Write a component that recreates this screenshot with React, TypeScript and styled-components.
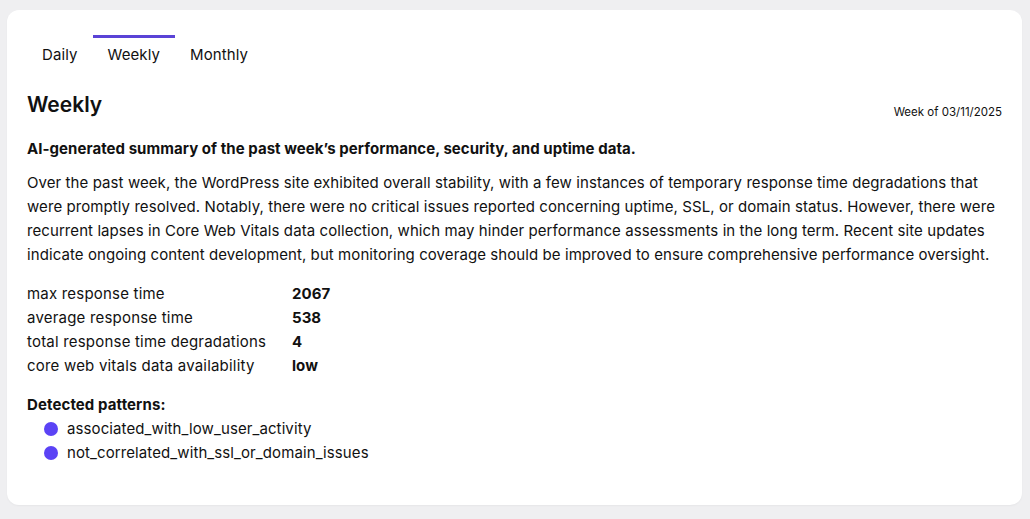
import React, { useState } from 'react';
import styled, { createGlobalStyle } from 'styled-components';

const GlobalStyle = createGlobalStyle`
  html, body {
    margin: 0;
    padding: 0;
    background: #efeff1;
    font-family: Inter, "Noto Sans", sans-serif;
    color: #111;
  }
`;

const Page = styled.div`
  padding: 10px 8px 14px 7px;
  box-sizing: border-box;
  width: 1030px;
  height: 519px;
`;

const Card = styled.div`
  background: #fff;
  border-radius: 12px;
  height: 100%;
  box-sizing: border-box;
  padding: 25px 20px 0 20px;
  box-shadow: 0 1px 2px rgba(0, 0, 0, 0.04);
  letter-spacing: 0.1px;
`;

const Tabs = styled.div`
  display: flex;
`;

const Tab = styled.button<{ $active?: boolean }>`
  background: none;
  border: none;
  border-top: 3px solid ${(p) => (p.$active ? '#5a43d6' : 'transparent')};
  padding: 7px 15px 0 15px;
  font-family: inherit;
  font-size: 15px;
  letter-spacing: 0.1px;
  color: #111;
  line-height: 20px;
  cursor: pointer;
`;

const HeaderRow = styled.div`
  display: flex;
  justify-content: space-between;
  align-items: flex-end;
  margin-top: 27px;
`;

const Title = styled.h2`
  margin: 0;
  font-size: 21px;
  font-weight: 600;
  line-height: 26px;
  letter-spacing: 0;
`;

const WeekOf = styled.span`
  font-size: 11.5px;
  line-height: 16px;
  letter-spacing: 0;
  transform: translateY(2px);
`;

const Subtitle = styled.p`
  margin: 21px 0 0 0;
  font-size: 15px;
  font-weight: 700;
  line-height: 20px;
  letter-spacing: 0.05px;
`;

const Summary = styled.p`
  margin: 12px 0 0 0;
  font-size: 15px;
  line-height: 24px;
  letter-spacing: 0.08px;
`;

const Metrics = styled.div`
  display: grid;
  grid-template-columns: 265px auto;
  margin-top: 15px;
  font-size: 15px;
  line-height: 24px;
  letter-spacing: 0.2px;
`;

const Value = styled.span`
  font-weight: 700;
  letter-spacing: 0.05px;
`;

const PatternsTitle = styled.div`
  margin-top: 15px;
  font-size: 15px;
  font-weight: 700;
  line-height: 24px;
`;

const PatternList = styled.ul`
  list-style: none;
  margin: 0;
  padding: 0 0 0 17px;
`;

const PatternItem = styled.li`
  display: flex;
  align-items: center;
  gap: 9px;
  font-size: 15px;
  line-height: 24px;
`;

const Dot = styled.span`
  width: 14px;
  height: 14px;
  border-radius: 50%;
  background: #5b43f5;
  flex-shrink: 0;
`;

const metrics: [string, string][] = [
  ['max response time', '2067'],
  ['average response time', '538'],
  ['total response time degradations', '4'],
  ['core web vitals data availability', 'low'],
];

const patterns = ['associated_with_low_user_activity', 'not_correlated_with_ssl_or_domain_issues'];

export default function App() {
  const [tab, setTab] = useState('Weekly');
  return (
    <>
      <GlobalStyle />
      <Page>
        <Card>
          <Tabs>
            {['Daily', 'Weekly', 'Monthly'].map((t) => (
              <Tab key={t} $active={tab === t} onClick={() => setTab(t)}>
                {t}
              </Tab>
            ))}
          </Tabs>
          <HeaderRow>
            <Title>Weekly</Title>
            <WeekOf>Week of 03/11/2025</WeekOf>
          </HeaderRow>
          <Subtitle>AI-generated summary of the past week’s performance, security, and uptime data.</Subtitle>
          <Summary>
            Over the past week, the WordPress site exhibited overall stability, with a few instances of temporary
            response time degradations that were promptly resolved. Notably, there were no critical issues reported
            concerning uptime, SSL, or domain status. However, there were recurrent lapses in Core Web Vitals data
            collection, which may hinder performance assessments in the long term. Recent site updates indicate
            ongoing content development, but monitoring coverage should be improved to ensure comprehensive
            performance oversight.
          </Summary>
          <Metrics>
            {metrics.map(([k, v]) => (
              <React.Fragment key={k}>
                <span>{k}</span>
                <Value>{v}</Value>
              </React.Fragment>
            ))}
          </Metrics>
          <PatternsTitle>Detected patterns:</PatternsTitle>
          <PatternList>
            {patterns.map((p) => (
              <PatternItem key={p}>
                <Dot />
                {p}
              </PatternItem>
            ))}
          </PatternList>
        </Card>
      </Page>
    </>
  );
}
